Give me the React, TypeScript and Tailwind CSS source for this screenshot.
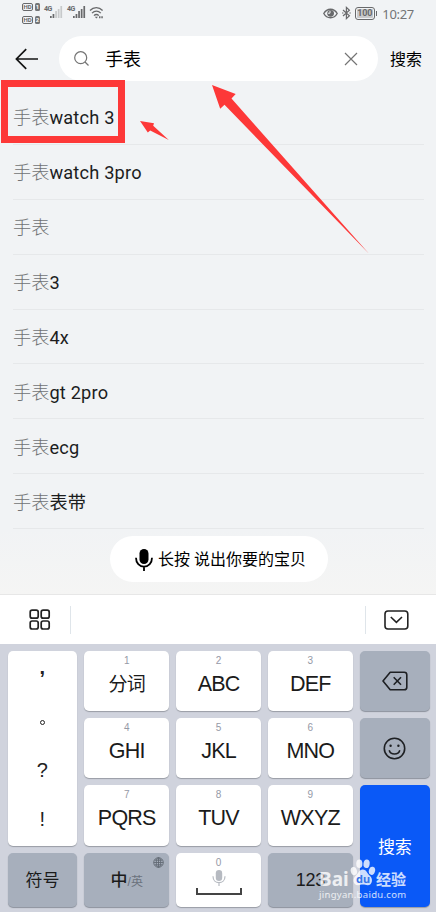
import type { ReactNode } from "react"

const suggestions = ["watch 3", "watch 3pro", "", "3", "4x", "gt 2pro", "ecg", "表带"]

export default function App() {
  return (
    <div className="relative flex h-[912px] w-[436px] flex-col overflow-hidden bg-[#f1f3f5] font-['Roboto','Noto_Sans_CJK_SC',sans-serif] text-black">
      <StatusBar />
      <SearchBar />
      <ul className="flex h-[448px] flex-col pl-[13px] pr-3 pt-[9px]">
        {suggestions.map((suffix, i) => (
          <li
            key={i}
            className="flex h-[54.9px] shrink-0 items-center border-b border-[#e6e8ea] pt-[3px] text-[18.2px] leading-none text-[#1c1d1e]"
          >
            <span className="font-light text-[#707274]">手表</span>
            <span className="tracking-[0.2px]">{suffix}</span>
          </li>
        ))}
      </ul>
      <div className="flex h-[66px] shrink-0 justify-center border-b border-[#e7e7e7] bg-linear-to-b from-[#f1f3f5] to-[#f5f5f4] pl-px pt-[7px]">
        <button className="flex h-[46px] w-[218px] items-center justify-center rounded-full bg-white pl-[4px] pt-px text-[16px] leading-none">
          <MicIcon />
          <span className="pt-px">长按 说出你要的宝贝</span>
        </button>
      </div>
      <Toolbar />
      <Keyboard />
      <Annotations />
      <Watermark />
    </div>
  )
}

function StatusBar() {
  return (
    <div className="flex h-9 shrink-0 items-start justify-between pl-[22px] pr-[22px] text-[#68696b]">
      <div className="flex items-start">
        <div className="flex flex-col gap-[5px] pt-[3px]">
          <HdBadge sim="1" />
          <HdBadge sim="2" />
        </div>
        <Signal bars={2} />
        <Signal bars={5} />
        <svg className="ml-[3px] mt-[6px]" width="15" height="14" viewBox="0 0 15 14" fill="none" stroke="currentColor" strokeWidth="1.3">
          <path d="M1 4.5C4.6.6 10 .6 13.6 4.5M3 7.1c2.6-2.7 6.2-2.7 8.8 0M5 9.6c1.4-1.5 3.4-1.5 4.8 0" />
          <path d="m5.8 10.8 1.6 1.8L9 10.8Z" fill="currentColor" stroke="none" />
          <path d="M10 11.2h1.5M12.3 11.2h1.5" strokeWidth="2" />
        </svg>
      </div>
      <div className="flex h-[26px] items-center">
        <svg width="15" height="11" viewBox="0 0 15 11" fill="none" stroke="currentColor" strokeWidth="1.4">
          <path d="M.8 5.5C4-.2 11-.2 14.2 5.5 11 11.2 4 11.2.8 5.5Z" />
          <circle cx="7.6" cy="5.3" r="3.4" fill="currentColor" stroke="none" />
          <path d="M7 2.8v2.4H4.8" stroke="#f1f3f5" strokeWidth="1" />
        </svg>
        <svg className="ml-[4px]" width="9" height="14" viewBox="0 0 9 14" fill="none" stroke="currentColor" strokeWidth="1.2">
          <path d="m1 4 6.4 5.8-3 2.8V1.4l3 2.8L1 10" />
          <path d="M0 7h1.4M7.4 7h1.4" />
        </svg>
        <div className="ml-[4px] flex h-[13px] w-[20px] items-center justify-center rounded-[3px] border border-[#68696b] p-px">
          <span className="flex h-full w-full items-center justify-center rounded-[1px] bg-[#c8c9cb] text-[9px] font-bold leading-none tracking-[-0.2px]">100</span>
        </div>
        <span className="ml-px h-[5px] w-[1.5px] bg-[#68696b]" />
        <span className="ml-[5px] pt-[2px] text-[13px] leading-none tracking-[-0.3px] text-[#737476] font-['Noto_Sans',sans-serif]">10:27</span>
      </div>
    </div>
  )
}

function HdBadge({ sim }: { sim: string }) {
  return (
    <div className="flex gap-[2px] text-[6px] font-bold leading-none">
      <span className="flex h-2 w-[11px] items-center justify-center rounded-[2px] border border-[#68696b]">HD</span>
      <span className="flex h-2 w-[5px] items-center justify-center rounded-[1.5px] bg-[#747577] text-white">{sim}</span>
    </div>
  )
}

function Signal({ bars }: { bars: number }) {
  return (
    <div className="relative ml-[4px] mt-[6px] h-[14px] w-[19px]">
      <span className="absolute left-0 top-0 text-[7px] font-bold leading-none tracking-[-0.5px]">4G</span>
      <svg className="absolute left-[6px] top-0" width="13" height="13" fill="currentColor">
        {[2, 4, 7, 9, 12].map((h, i) => (
          <rect key={h} x={i * 2.6} y={12 - h} width="1.7" height={h} opacity={i < bars ? 1 : 0.3} />
        ))}
      </svg>
    </div>
  )
}

function SearchBar() {
  return (
    <div className="flex h-[45px] shrink-0 items-center pl-[15px] pr-[14px]">
      <svg width="24" height="22" viewBox="0 0 24 22" fill="none" stroke="#141414" strokeWidth="1.7">
        <path d="M23 11H1.5M11.2 1.2 1.4 11l9.8 9.8" />
      </svg>
      <div className="ml-5 flex h-[45px] w-[319px] items-center rounded-full bg-white pl-[15px] pr-[20px]">
        <svg width="15" height="15" viewBox="0 0 15 15" fill="none" stroke="#747474" strokeWidth="1.2">
          <circle cx="6.7" cy="6.7" r="6" />
          <path d="m11 11 3.5 3.5" />
        </svg>
        <span className="ml-[16px] flex-1 pt-[2px] text-[18px] leading-none">手表</span>
        <svg width="14" height="14" viewBox="0 0 14 14" stroke="#747474" strokeWidth="1.2">
          <path d="m1 1 12 12M13 1 1 13" />
        </svg>
      </div>
      <span className="ml-3 whitespace-nowrap pt-[3px] text-[16px] leading-none">搜索</span>
    </div>
  )
}

function MicIcon() {
  return (
    <svg className="mr-[5px]" width="18" height="24" viewBox="0 0 18 24" fill="none" stroke="#000" strokeWidth="1.8">
      <rect x="4.5" y="1" width="9" height="15" rx="4.5" fill="#000" stroke="none" />
      <path d="M1 9.7C1 15 4.4 18.6 9 18.6s8-3.6 8-8.9M9 18v5" />
    </svg>
  )
}

function Toolbar() {
  return (
    <div className="flex h-[49px] shrink-0 items-center bg-white">
      <svg className="ml-[29px]" width="22" height="22" viewBox="0 0 22 22" fill="none" stroke="#222" strokeWidth="1.7">
        <rect x="1.2" y="1.2" width="8" height="8" rx="2" />
        <rect x="12.2" y="1.2" width="8" height="8" rx="2" />
        <rect x="1.2" y="12" width="8" height="8" rx="2" />
        <rect x="12.2" y="12" width="8" height="8" rx="2" />
      </svg>
      <span className="ml-[19px] h-[28px] w-px bg-[#dfe5ea]" />
      <span className="ml-auto h-[28px] w-px bg-[#dfe5ea]" />
      <svg className="ml-[18px] mr-[27px]" width="25" height="20" viewBox="0 0 25 20" fill="none" stroke="#222" strokeWidth="1.6">
        <rect x="1" y="1" width="22.8" height="18" rx="3" />
        <path d="m6.8 7 5.6 5.3L18 7" />
      </svg>
    </div>
  )
}

function Keyboard() {
  return (
    <div className="grid flex-1 grid-cols-[69.6px_84.5px_84.5px_84.5px_70px] grid-rows-[60.2px_60.2px_60.2px_54.2px] content-start gap-x-[7.3px] gap-y-[7px] bg-[#d0d3dd] pl-[7.6px] pt-[7px] font-['Liberation_Sans','Noto_Sans_CJK_SC',sans-serif]">
      <div className="row-span-3 flex flex-col items-center rounded-[5px] bg-white text-[20px] text-[#222] shadow-[0_1px_1px_#989ca5]">
        <span className="h-[48px] pt-[2px] font-bold leading-[28px]">,</span>
        <span className="flex h-[46px] items-center">
          <span className="size-[5px] rounded-full border border-[#222]" />
        </span>
        <span className="h-[49px] pt-[11px] leading-[28px]">?</span>
        <span className="pt-[11px] leading-[28px]">!</span>
      </div>
      <LetterKey digit="1"><span className="text-[19px]">分词</span></LetterKey>
      <LetterKey digit="2">ABC</LetterKey>
      <LetterKey digit="3">DEF</LetterKey>
      <GrayKey>
        <svg width="26" height="20" viewBox="0 0 26 20" fill="none" stroke="#1e2023" strokeWidth="1.6" strokeLinejoin="round">
          <path d="M8.2 1.2h14a2.6 2.6 0 0 1 2.6 2.6v12.4a2.6 2.6 0 0 1-2.6 2.6h-14L1 10Z" />
          <path d="m11.7 6.2 7.3 7.6M19 6.2l-7.3 7.6" />
        </svg>
      </GrayKey>
      <LetterKey digit="4">GHI</LetterKey>
      <LetterKey digit="5">JKL</LetterKey>
      <LetterKey digit="6">MNO</LetterKey>
      <GrayKey>
        <svg width="23" height="23" viewBox="0 0 23 23" fill="none" stroke="#1e2023" strokeWidth="1.6">
          <circle cx="11.5" cy="11.5" r="10.2" />
          <path d="M6.2 13.2c1.4 5 9.2 5 10.6 0" />
          <circle cx="7.6" cy="8.7" r="1.2" fill="#1e2023" stroke="none" />
          <circle cx="15.4" cy="8.7" r="1.2" fill="#1e2023" stroke="none" />
        </svg>
      </GrayKey>
      <LetterKey digit="7">PQRS</LetterKey>
      <LetterKey digit="8">TUV</LetterKey>
      <LetterKey digit="9">WXYZ</LetterKey>
      <div className="row-span-2 flex justify-center rounded-[5px] bg-[#0a59f7] pt-[54px] text-[17px] leading-[17px] text-white shadow-[0_1px_1px_#989ca5]">
        搜索
      </div>
      <GrayKey><span className="pt-[2px] text-[17px]">符号</span></GrayKey>
      <GrayKey>
        <span className="pt-px text-[17px] font-medium">中</span>
        <span className="mt-[5px] text-[12px] text-[#6b727c]">/英</span>
        <svg className="absolute right-[5px] top-[4px]" width="11" height="11" viewBox="0 0 11 11" fill="none" stroke="#626a74" strokeWidth=".9">
          <circle cx="5.5" cy="5.5" r="4.8" />
          <ellipse cx="5.5" cy="5.5" rx="2.2" ry="4.8" />
          <path d="M.7 5.5h9.6M5.5.7v9.6M1.5 3.2h8M1.5 7.8h8" />
        </svg>
      </GrayKey>
      <div className="flex flex-col items-center rounded-[5px] bg-white pt-[4px] shadow-[0_1px_1px_#989ca5]">
        <span className="text-[10px] leading-[11px] text-[#9599a6]">0</span>
        <svg className="mt-[2px]" width="14" height="16" viewBox="0 0 14 16" fill="none" stroke="#b6bac1" strokeWidth="1.2">
          <rect x="3.8" y="0" width="6.4" height="11" rx="3.2" fill="#b6bac1" stroke="none" />
          <path d="M1 6.2c0 8.6 12 8.6 12 0M7 13v3" />
        </svg>
        <span className="mt-[2px] h-[7px] w-[46px] border-2 border-t-0 border-[#444]" />
      </div>
      <GrayKey><span className="text-[18px] tracking-[-0.3px]">123</span></GrayKey>
    </div>
  )
}

function LetterKey({ digit, children }: { digit: string; children: ReactNode }) {
  return (
    <div className="flex flex-col items-center rounded-[5px] bg-white pt-[4px] text-[#1b1b1b] shadow-[0_1px_1px_#989ca5]">
      <span className="text-[10px] leading-[11px] text-[#9599a6]">{digit}</span>
      <span className="mt-[5px] text-[21.5px] leading-[27px] tracking-[-0.8px]">{children}</span>
    </div>
  )
}

function GrayKey({ children }: { children: ReactNode }) {
  return (
    <div className="relative flex items-center justify-center rounded-[5px] bg-[#a7afbc] leading-none text-[#1b1b1b] shadow-[0_1px_1px_#8c929d]">
      {children}
    </div>
  )
}

// red box and arrows laid over the results
function Annotations() {
  return (
    <svg className="pointer-events-none absolute left-0 top-0" width="436" height="270" fill="#fd3838">
      <rect x="4.5" y="83.5" width="117" height="56" fill="none" stroke="#fd3838" strokeWidth="7" />
      <path d="m140 121 14 2.2-.8 2.6 15.6 14.2-18.6-9.6-2.4 2.2Z" />
      <path d="m212 85 23.7 9-4.2 4.5L369 253.8 224.5 104.8l-4.3 3.9Z" />
    </svg>
  )
}

function Watermark() {
  return (
    <div className="pointer-events-none absolute left-[319px] top-[858px] w-[92px] text-white/80 font-['Noto_Sans','Noto_Sans_CJK_SC',sans-serif]">
      <div className="flex h-[29px] items-start">
        <span className="w-[31px] pt-[9px] text-[19px] font-bold leading-[24px]">Bai</span>
        <div className="relative h-[29px] w-[26px]">
          <svg className="absolute left-0 top-0" width="26" height="29" viewBox="0 0 27 29" fill="currentColor">
            <ellipse cx="4" cy="13" rx="3.2" ry="4.3" transform="rotate(-15 4 13)" />
            <ellipse cx="9.7" cy="5.4" rx="3.2" ry="4.5" />
            <ellipse cx="17.2" cy="5.4" rx="3.2" ry="4.5" transform="rotate(8 17.2 5.4)" />
            <ellipse cx="22.8" cy="12.7" rx="3.2" ry="4.3" transform="rotate(15 22.8 12.7)" />
            <path d="M13.3 11.5c4 0 4.2 4 7.3 6.4 3.8 3.2 2.6 9.8-2.2 9.8-2 0-3-.7-5-.7s-3 .7-5 .7c-5.2 0-6.3-6.6-2.4-9.8 3.1-2.4 3.2-6.4 7.3-6.4Z" />
          </svg>
          <span className="absolute left-[6px] top-[15px] text-[11px] font-bold leading-none text-[#3976e9]">du</span>
        </div>
        <span className="whitespace-nowrap pt-[10px] text-[15px] font-bold leading-[22px]">经验</span>
      </div>
      <div className="whitespace-nowrap pt-px text-[9.5px] leading-[13px] tracking-[0.3px]">jingyan.baidu.com</div>
    </div>
  )
}
